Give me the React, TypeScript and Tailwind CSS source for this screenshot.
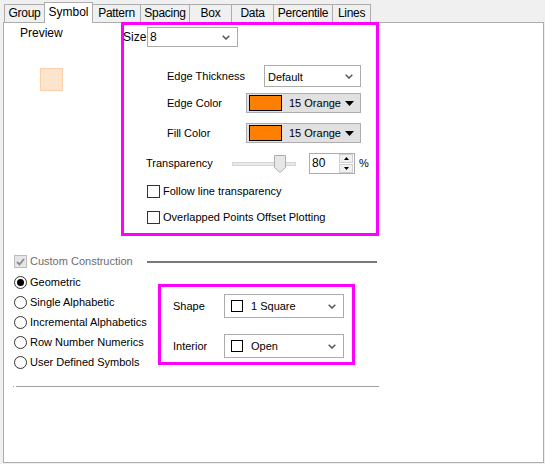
import React from 'react';

const tabs = [
  { label: 'Group', width: 'w-[40px]' },
  { label: 'Symbol', width: 'w-[49px]', active: true },
  { label: 'Pattern', width: 'w-[47px]' },
  { label: 'Spacing', width: 'w-[49px]' },
  { label: 'Box', width: 'w-[42px]' },
  { label: 'Data', width: 'w-[42px]' },
  { label: 'Percentile', width: 'w-[59px]' },
  { label: 'Lines', width: 'w-[39px]' },
];

const radios = ['Geometric', 'Single Alphabetic', 'Incremental Alphabetics', 'Row Number Numerics', 'User Defined Symbols'];

function Chevron() {
  return (
    <svg width="8" height="5" viewBox="0 0 8 5" className="shrink-0">
      <path d="M0.7 0.7 L4 4 L7.3 0.7" fill="none" stroke="#555" strokeWidth="1.5" />
    </svg>
  );
}

function DownTri() {
  return (
    <svg width="9" height="5" viewBox="0 0 9 5" className="shrink-0">
      <path d="M0 0H9L4.5 5Z" fill="#000" />
    </svg>
  );
}

function Combo({ className, children }: { className: string; children: React.ReactNode }) {
  return (
    <div className={`flex items-center border border-[#acacac] bg-white pr-[7px] ${className}`}>
      <div className="flex flex-1 items-center whitespace-nowrap">{children}</div>
      <Chevron />
    </div>
  );
}

function ColorButton() {
  return (
    <div className="flex h-[20px] w-[115px] items-center border border-[#adadad] bg-[#e1e1e1] pr-[6px]">
      <div className="ml-[2px] h-[16px] w-[33px] shrink-0 border border-black bg-[#ff8000]" />
      <span className="ml-[7px] whitespace-nowrap">15 Orange</span>
      <div className="ml-auto">
        <DownTri />
      </div>
    </div>
  );
}

function CheckBox({ label }: { label: string }) {
  return (
    <div className="flex h-[13px] items-center">
      <div className="h-[13px] w-[13px] border border-[#333] bg-white" />
      <span className="ml-[3px] whitespace-nowrap">{label}</span>
    </div>
  );
}

function Radio({ label, checked }: { label: string; checked?: boolean }) {
  return (
    <div className="flex h-[20px] items-center">
      <div className="flex h-[13px] w-[13px] items-center justify-center rounded-full border border-[#333] bg-white">
        {checked && <div className="h-[7px] w-[7px] rounded-full bg-black" />}
      </div>
      <span className="ml-[3px] whitespace-nowrap">{label}</span>
    </div>
  );
}

export default function App() {
  return (
    <div className="h-[464px] w-[545px] overflow-hidden bg-[#f0f0f0] font-['Liberation_Sans',sans-serif] text-[11px] leading-[13px] text-black">
      {/* tab strip */}
      <div className="flex h-[22px] items-end pl-[4px]">
        {tabs.map((t, i) =>
          t.active ? (
            <div
              key={t.label}
              className={`relative z-10 -mb-px flex h-[21px] items-start justify-center border border-b-0 border-[#adadad] bg-white pt-[3px] text-[12px] ${t.width}`}
            >
              {t.label}
            </div>
          ) : (
            <div
              key={t.label}
              className={`flex h-[18px] items-center justify-center border-t border-[#adadad] bg-[#f0f0f0] text-[12px] tracking-[-0.3px] ${t.width} ${
                tabs[i - 1]?.active ? '' : 'border-l'
              } ${i === tabs.length - 1 ? 'border-r' : ''}`}
            >
              {t.label}
            </div>
          )
        )}
      </div>

      {/* page */}
      <div className="ml-[3px] h-[441px] w-[541px] border border-[#adadad] bg-white">
        <div className="flex items-start">
          <div className="w-[117px]">
            <div className="pl-[16px] pt-[4px] text-[12px]">Preview</div>
            <div className="ml-[36px] mt-[28px] h-[23px] w-[23px] border border-[#fbd0a8] bg-[#fde4cc]" />
          </div>

          <div className="-mt-px flex h-[214px] w-[258px] flex-col border-[3px] border-[#ff00ff]">
            <div className="mt-[2px] flex h-[20px] items-center">
              <span className="-ml-px w-[24px] text-[12px]">Size</span>
              <Combo className="h-[20px] w-[91px] pl-[2px]">
                <span className="text-[12px]">8</span>
              </Combo>
            </div>

            <div className="mt-[18px] flex h-[22px] items-center pl-[43px]">
              <span className="w-[97px] whitespace-nowrap">Edge Thickness</span>
              <Combo className="h-[22px] w-[97px] pl-[3px]">
                <span className="pt-[2px]">Default</span>
              </Combo>
            </div>

            <div className="mt-[6px] flex h-[20px] items-center pl-[43px]">
              <span className="w-[79px]">Edge Color</span>
              <ColorButton />
            </div>

            <div className="mt-[10px] flex h-[20px] items-center pl-[43px]">
              <span className="w-[79px]">Fill Color</span>
              <ColorButton />
            </div>

            <div className="mt-[10px] flex h-[21px] items-center pl-[22px]">
              <span className="w-[86px]">Transparency</span>
              <div className="relative flex h-[21px] w-[64px] items-center">
                <div className="h-[4px] w-full border border-[#d6d6d6] bg-[#e7eaea]" />
                <svg width="12" height="18" viewBox="0 0 12 18" className="absolute left-[42px] top-[2px]">
                  <path d="M0.5 0.5H11.5V12.5L6 17.5L0.5 12.5Z" fill="#e7e7e7" stroke="#acacac" />
                </svg>
              </div>
              <div className="ml-[13px] flex h-[21px] w-[46px] items-center border border-[#acacac] bg-white pr-px">
                <span className="ml-[2px] flex-1 text-[12px]">80</span>
                <div className="flex flex-col gap-px">
                  <div className="flex h-[9px] w-[14px] items-center justify-center border border-[#cfcfcf] bg-[#f0f0f0]">
                    <svg width="5" height="3" viewBox="0 0 5 3"><path d="M0 3H5L2.5 0Z" fill="#000" /></svg>
                  </div>
                  <div className="flex h-[9px] w-[14px] items-center justify-center border border-[#cfcfcf] bg-[#f0f0f0]">
                    <svg width="5" height="3" viewBox="0 0 5 3"><path d="M0 0H5L2.5 3Z" fill="#000" /></svg>
                  </div>
                </div>
              </div>
              <span className="ml-[4px]">%</span>
            </div>

            <div className="mt-[11px] pl-[23px]">
              <CheckBox label="Follow line transparency" />
            </div>
            <div className="mt-[13px] pl-[23px]">
              <CheckBox label="Overlapped Points Offset Plotting" />
            </div>
          </div>
        </div>

        {/* custom construction */}
        <div className="mt-[19px] flex h-[13px] items-center pl-[10px]">
          <div className="flex w-[133px] items-center">
            <div className="flex h-[13px] w-[13px] items-center justify-center border border-[#bcbcbc] bg-[#e6e6e6]">
              <svg width="9" height="8" viewBox="0 0 9 8">
                <path d="M1 4L3.5 6.5L8 1" fill="none" stroke="#8a8a8a" strokeWidth="1.8" />
              </svg>
            </div>
            <span className="ml-[3px] whitespace-nowrap text-[#6d6d6d]">Custom Construction</span>
          </div>
          <div className="h-[2px] w-[230px] bg-[#7a7a7a]" />
        </div>

        <div className="mt-[4px] flex items-start pl-[10px]">
          <div className="w-[144px]">
            {radios.map((r, i) => (
              <Radio key={r} label={r} checked={i === 0} />
            ))}
          </div>

          <div className="mt-[12px] flex h-[81px] w-[197px] flex-col border-[3px] border-[#ff00ff]">
            <div className="mt-[7px] flex h-[24px] items-center pl-[12px]">
              <span className="w-[51px]">Shape</span>
              <Combo className="h-[24px] w-[120px] pl-[6px]">
                <div className="h-[12px] w-[12px] border border-black" />
                <span className="ml-[8px]">1 Square</span>
              </Combo>
            </div>
            <div className="mt-[16px] flex h-[24px] items-center pl-[12px]">
              <span className="w-[51px]">Interior</span>
              <Combo className="h-[24px] w-[120px] pl-[6px]">
                <div className="h-[12px] w-[12px] border border-black" />
                <span className="ml-[8px]">Open</span>
              </Combo>
            </div>
          </div>
        </div>

        <div className="ml-[9px] mt-[14px] flex items-center gap-px">
          <div className="h-px w-px bg-[#a0a0a0]" />
          <div className="ml-px h-px w-[363px] bg-[#a0a0a0]" />
        </div>
      </div>
    </div>
  );
}
